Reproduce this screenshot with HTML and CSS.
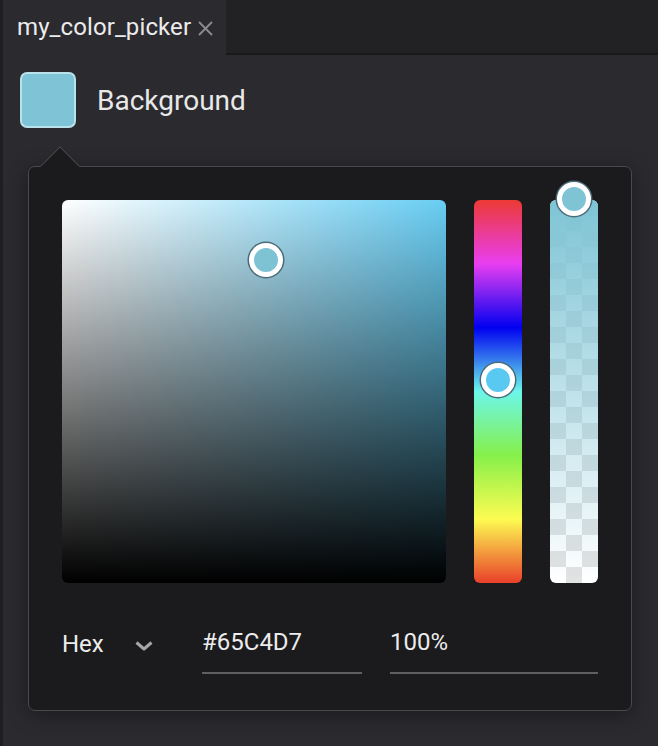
FILE: index.html
```
<!DOCTYPE html>
<html lang="en">
<head>
<meta charset="utf-8">
<title>my_color_picker</title>
<link rel="stylesheet" href="styles.css">
</head>
<body>
<div class="app">
  <div class="tabbar">
    <div class="tab">
      <span class="tab-title">my_color_picker</span>
      <svg class="tab-close" width="17" height="17" viewBox="0 0 17 17"><path d="M2 2L15 15M15 2L2 15" stroke="#8b8a8f" stroke-width="1.9" fill="none"/></svg>
    </div>
    <div class="tab-filler"></div>
  </div>
  <div class="content">
    <div class="prop-row">
      <div class="swatch"></div>
      <span class="prop-label">Background</span>
    </div>
    <div class="popover">
      <div class="arrow"></div>
      <div class="pickers">
        <div class="sv">
          <span class="handle sv-handle"></span>
        </div>
        <div class="hue">
          <span class="handle hue-handle"></span>
        </div>
        <div class="alpha">
          <div class="alpha-fill"></div>
          <span class="handle alpha-handle"></span>
        </div>
      </div>
      <div class="inputs">
        <div class="format">
          <span>Hex</span>
          <svg class="chevron" width="22" height="13" viewBox="0 0 22 13"><path d="M3.5 3.5L11 10L18.5 3.5" stroke="#a6a5a9" stroke-width="3" fill="none" stroke-linejoin="round"/></svg>
        </div>
        <div class="field">#65C4D7</div>
        <div class="field">100%</div>
      </div>
    </div>
  </div>
</div>
</body>
</html>
```
FILE: styles.css
```
* { box-sizing: border-box; }
html, body { margin: 0; padding: 0; }
body {
  background: #2b2a2f;
  font-family: Roboto, "Liberation Sans", sans-serif;
  color: #ebebeb;
}
.app {
  width: 658px;
  height: 746px;
  border-left: 3px solid #1f1e22;
  background: #2b2a2f;
  overflow: hidden;
}
.tabbar {
  display: flex;
  height: 55px;
  background: #222124;
}
.tab {
  width: 223px;
  height: 55px;
  background: #2b2a2f;
  display: flex;
  align-items: center;
  padding-left: 14px;
  gap: 6px;
}
.tab-title {
  font-size: 24px;
  color: #ececec;
  line-height: 1;
  padding-bottom: 2px;
  letter-spacing: 0.1px;
}
.tab-close { margin-top: 1px; }
.tab-filler {
  flex: 1;
  border-bottom: 2px solid #19181b;
}
.content {
  padding: 17px 0 0 17px;
}
.prop-row {
  display: flex;
  align-items: center;
}
.swatch {
  width: 56px;
  height: 56px;
  border-radius: 7px;
  background: #7fc4d6;
  border: 2px solid #b9e1eb;
}
.prop-label {
  margin-left: 21px;
  font-size: 28px;
  color: #e8e8e8;
}
.popover {
  position: relative;
  margin: 38px 0 0 8px;
  width: 604px;
  background: #1b1a1d;
  border: 1px solid #4a494e;
  border-radius: 7px;
  padding: 33px 33px 36px;
  box-shadow: 0 4px 20px rgba(0,0,0,0.4);
}
.arrow {
  position: absolute;
  left: 17px;
  top: -15px;
  width: 28px;
  height: 28px;
  background: #1b1a1d;
  border-top: 1px solid #4a494e;
  border-left: 1px solid #4a494e;
  transform: rotate(45deg);
}
.pickers {
  display: flex;
  gap: 28px;
  height: 383px;
}
.sv {
  position: relative;
  width: 384px;
  height: 383px;
  border-radius: 6px;
  background:
    linear-gradient(to top, #000, rgba(0,0,0,0)),
    linear-gradient(to right, #fff, #68cdf3);
}
.hue {
  position: relative;
  width: 48px;
  border-radius: 6px;
  background: linear-gradient(to bottom,
    #ec3a34 0%,
    #e93ef1 16.67%,
    #0000f0 33.33%,
    #6cf6ea 50%,
    #86f04a 66.67%,
    #fdfc52 83.33%,
    #e9402a 100%);
}
.alpha {
  position: relative;
  width: 48px;
  border-radius: 6px;
  background: conic-gradient(#fff 25%, #e2e2e2 0 50%, #fff 0 75%, #e2e2e2 0) left bottom / 32px 32px;
}
.alpha-fill {
  position: absolute;
  inset: 0;
  border-radius: 6px;
  background: linear-gradient(to bottom, #7ec4d5, rgba(126,196,213,0));
}
.handle {
  position: absolute;
  width: 34px;
  height: 34px;
  border-radius: 50%;
  border: 5px solid #fff;
  box-shadow: 0 0 0 1.5px #4c6b78;
}
.sv-handle { left: 187px; top: 43px; background: #7dc3d4; }
.hue-handle { left: 7px; top: 163px; background: #5ac9f1; }
.alpha-handle { left: 7px; top: -18px; background: #7ec4d5; }
.inputs {
  display: grid;
  grid-template-columns: 112px 160px 208px;
  column-gap: 28px;
  margin-top: 39px;
}
.format {
  display: flex;
  align-items: center;
  height: 50px;
  padding-bottom: 6px;
  font-size: 24px;
  color: #ececec;
}
.chevron { margin-left: 29px; margin-top: 2px; }
.field {
  height: 52px;
  line-height: 40px;
  font-size: 24px;
  color: #ececec;
  border-bottom: 2px solid #5f5e63;
}
```
